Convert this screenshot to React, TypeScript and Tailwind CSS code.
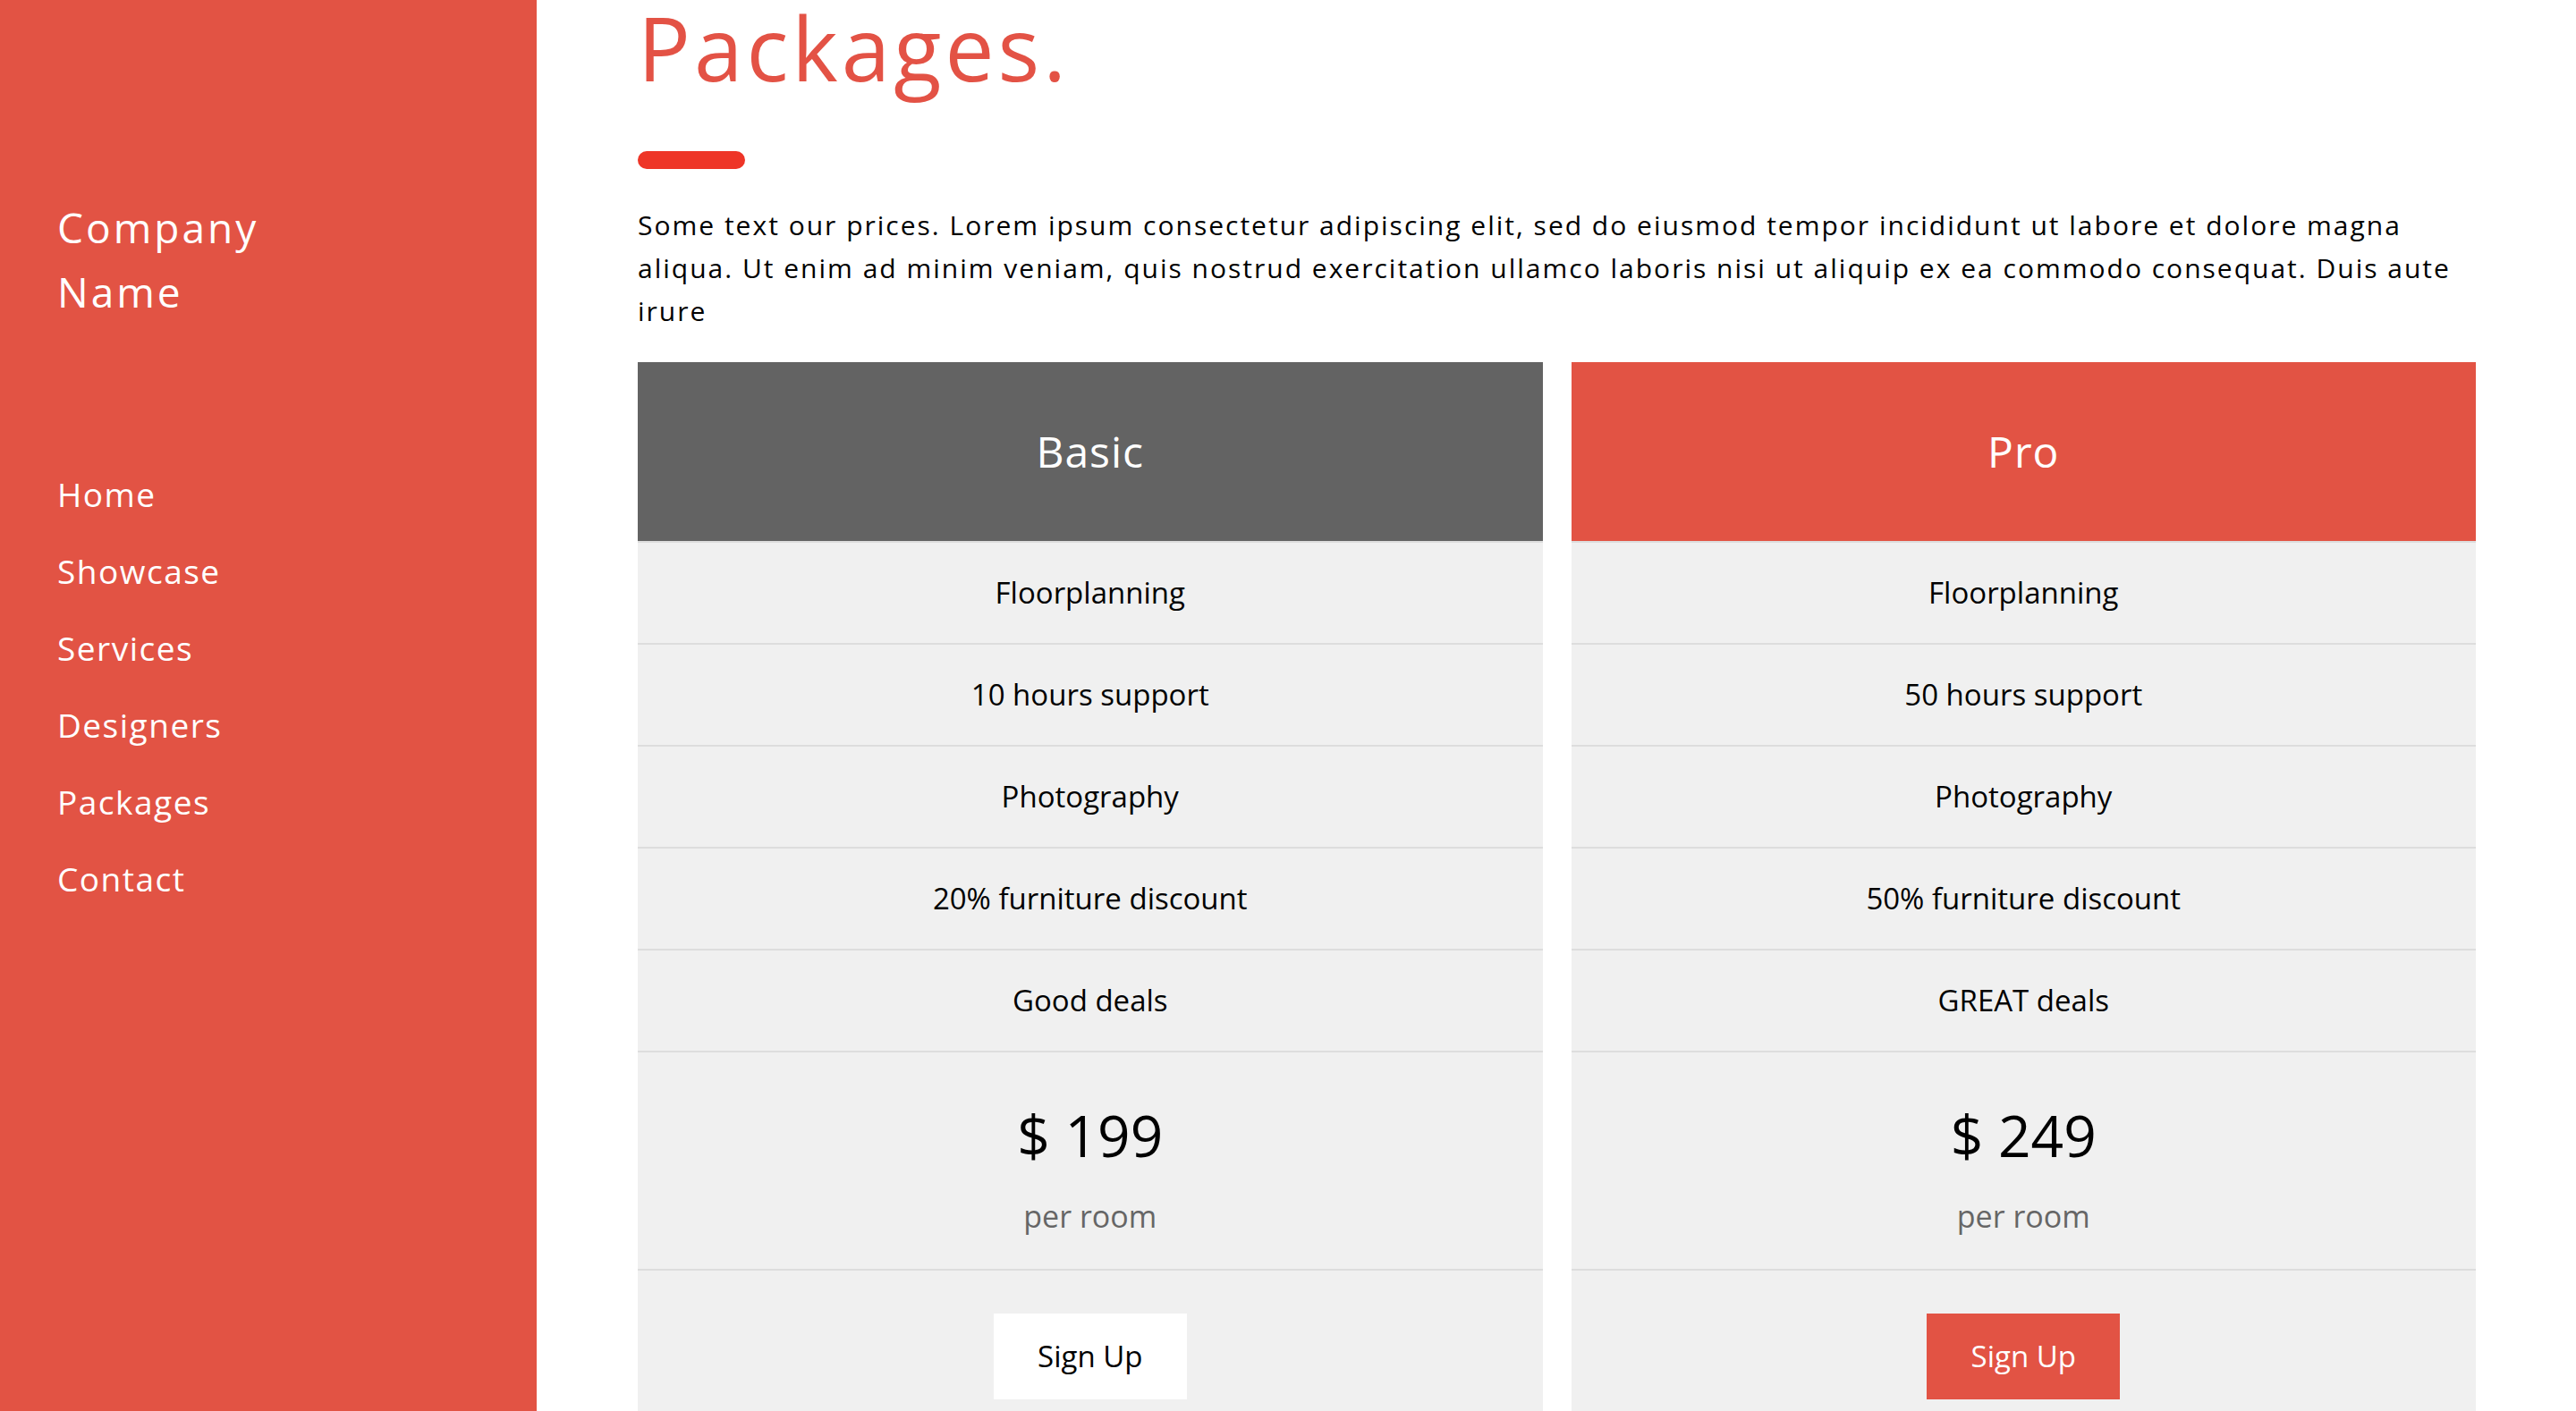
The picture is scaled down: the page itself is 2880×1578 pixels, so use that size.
import clsx from 'clsx';

const NAV_LINKS = ['Home', 'Showcase', 'Services', 'Designers', 'Packages', 'Contact'];

type Plan = {
  name: string;
  features: string[];
  price: number;
  featured?: boolean;
};

const PLANS: Plan[] = [
  {
    name: 'Basic',
    features: ['Floorplanning', '10 hours support', 'Photography', '20% furniture discount', 'Good deals'],
    price: 199,
  },
  {
    name: 'Pro',
    features: ['Floorplanning', '50 hours support', 'Photography', '50% furniture discount', 'GREAT deals'],
    price: 249,
    featured: true,
  },
];

const PlanCard = ({ plan }: { plan: Plan }) => {
  return (
    <div className="flex flex-col bg-[#f0f0f0] text-center">
      <div
        className={clsx(
          'h-[200px] flex items-center justify-center text-[48px] tracking-[1px] text-white',
          plan.featured ? 'bg-[#e25344]' : 'bg-[#636363]'
        )}
      >
        {plan.name}
      </div>

      {plan.features.map((feature) => (
        <div
          key={feature}
          className="h-[114px] border-t-2 border-[#dddddd] flex items-center justify-center text-[33px] leading-[50px] text-black"
        >
          {feature}
        </div>
      ))}

      {/* Price */}
      <div className="border-t-2 border-[#dddddd] pt-[45px] pb-[33px]">
        <div className="text-[64px] leading-[96px] text-black">$ {plan.price}</div>
        <div className="mt-[17px] text-[34px] leading-[51px] text-[#666666]">per room</div>
      </div>

      <div className="border-t-2 border-[#dddddd] pt-[48px] pb-[48px] flex justify-center">
        <button
          className={clsx(
            'w-[216px] h-[96px] text-[33px]',
            plan.featured ? 'bg-[#e25344] text-white' : 'bg-white text-black'
          )}
        >
          Sign Up
        </button>
      </div>
    </div>
  );
};

export default function App() {
  return (
    <div
      className="flex h-screen overflow-hidden bg-white"
      style={{ fontFamily: '"Open Sans", "Noto Sans", sans-serif' }}
    >
      <aside className="w-[600px] shrink-0 h-full bg-[#e25344] pl-[64px] pt-[218px] text-white">
        <div className="text-[46px] leading-[72px] tracking-[3px]">
          Company
          <br />
          Name
        </div>
        <nav className="mt-[148px] flex flex-col">
          {NAV_LINKS.map((link) => (
            <a
              key={link}
              href="#"
              className="h-[86px] text-[37px] leading-[86px] tracking-[1.5px] text-white"
            >
              {link}
            </a>
          ))}
        </nav>
      </aside>

      <main className="flex-1 h-full overflow-y-auto pl-[113px] pr-[112px] pt-[4px]">
        <h1 className="text-[98px] leading-[98px] tracking-[4px] font-medium text-[#e35245]">Packages.</h1>
        <div className="mt-[67px] w-[120px] h-[20px] rounded-full bg-[#ee3527]" />
        <p className="mt-[39px] text-[30px] leading-[48px] tracking-[2px] text-black">
          Some text our prices. Lorem ipsum consectetur adipiscing elit, sed do eiusmod tempor incididunt ut
          labore et dolore magna aliqua. Ut enim ad minim veniam, quis nostrud exercitation ullamco laboris nisi
          ut aliquip ex ea commodo consequat. Duis aute irure
        </p>

        <div className="mt-[33px] grid grid-cols-2 gap-[32px]">
          {PLANS.map((plan) => (
            <PlanCard key={plan.name} plan={plan} />
          ))}
        </div>
      </main>
    </div>
  );
}
